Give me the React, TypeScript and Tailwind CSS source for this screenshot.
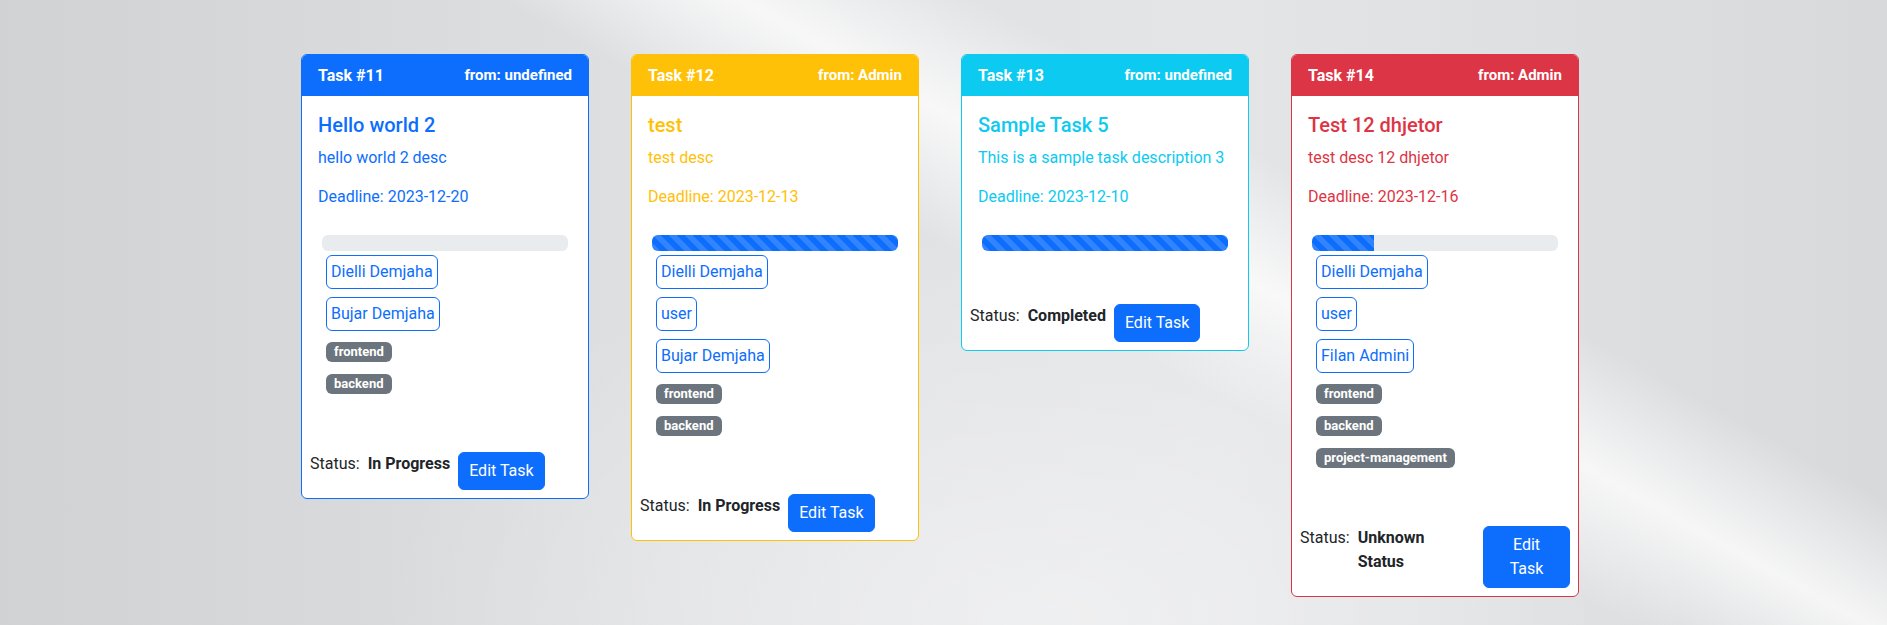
import React from "react";

type Tone = "primary" | "warning" | "info" | "danger";

type Task = {
  id: number;
  from: string;
  title: string;
  desc: string;
  deadline: string;
  progress: number;
  users: string[];
  tags: string[];
  status: string;
  tone: Tone;
  narrowFooter?: boolean;
};

const tasks: Task[] = [
  {
    id: 11,
    from: "undefined",
    title: "Hello world 2",
    desc: "hello world 2 desc",
    deadline: "2023-12-20",
    progress: 0,
    users: ["Dielli Demjaha", "Bujar Demjaha"],
    tags: ["frontend", "backend"],
    status: "In Progress",
    tone: "primary",
  },
  {
    id: 12,
    from: "Admin",
    title: "test",
    desc: "test desc",
    deadline: "2023-12-13",
    progress: 100,
    users: ["Dielli Demjaha", "user", "Bujar Demjaha"],
    tags: ["frontend", "backend"],
    status: "In Progress",
    tone: "warning",
  },
  {
    id: 13,
    from: "undefined",
    title: "Sample Task 5",
    desc: "This is a sample task description 3",
    deadline: "2023-12-10",
    progress: 100,
    users: [],
    tags: [],
    status: "Completed",
    tone: "info",
  },
  {
    id: 14,
    from: "Admin",
    title: "Test 12 dhjetor",
    desc: "test desc 12 dhjetor",
    deadline: "2023-12-16",
    progress: 25,
    users: ["Dielli Demjaha", "user", "Filan Admini"],
    tags: ["frontend", "backend", "project-management"],
    status: "Unknown Status",
    tone: "danger",
    narrowFooter: true,
  },
];

const toneStyles: Record<Tone, { border: string; header: string; text: string }> = {
  primary: { border: "border-[#0d6efd]", header: "bg-[#0d6efd]", text: "text-[#0d6efd]" },
  warning: { border: "border-[#ffc107]", header: "bg-[#ffc107]", text: "text-[#ffc107]" },
  info: { border: "border-[#0dcaf0]", header: "bg-[#0dcaf0]", text: "text-[#0dcaf0]" },
  danger: { border: "border-[#dc3545]", header: "bg-[#dc3545]", text: "text-[#dc3545]" },
};

const TaskCard = ({ task }: { task: Task }) => {
  const tone = toneStyles[task.tone];

  return (
    <div className={`w-[288px] shrink-0 rounded-md border bg-white ${tone.border}`}>
      <div
        className={`flex h-[41px] items-center justify-between rounded-t-[5px] px-4 text-white ${tone.header}`}
      >
        <span className="text-base font-bold">Task #{task.id}</span>
        <span className="text-[15px] font-bold">from: {task.from}</span>
      </div>

      <div className={`px-4 pt-[17px] ${task.tags.length ? "pb-[50px]" : "pb-[45px]"} ${tone.text}`}>
        <h5 className="mb-[9px] text-[20px] leading-6 font-medium">{task.title}</h5>
        <p className="mb-[15px] leading-6">{task.desc}</p>
        <p className="mb-[26px] leading-6">Deadline: {task.deadline}</p>

        <div className="mx-1 h-4 overflow-hidden rounded-md bg-[#e9ecef]">
          <div
            className="h-full bg-[#0d6efd] bg-[linear-gradient(45deg,rgba(255,255,255,.15)_25%,transparent_25%,transparent_50%,rgba(255,255,255,.15)_50%,rgba(255,255,255,.15)_75%,transparent_75%,transparent)] bg-[length:16px_16px]"
            style={{ width: `${task.progress}%` }}
          />
        </div>

        {task.users.length > 0 && (
          <div className="mt-1 ml-2 flex flex-col items-start gap-2">
            {task.users.map((u) => (
              <span
                key={u}
                className="rounded-md border border-[#0d6efd] px-1 py-1 leading-6 text-[#0d6efd]"
              >
                {u}
              </span>
            ))}
          </div>
        )}

        {task.tags.length > 0 && (
          <div className="mt-[11px] ml-2 flex flex-col items-start gap-3">
            {task.tags.map((t) => (
              <span
                key={t}
                className="h-5 rounded-md bg-[#6c757d] px-2 text-[13px] leading-5 font-bold text-white"
              >
                {t}
              </span>
            ))}
          </div>
        )}
      </div>

      <div className="flex items-start gap-2 p-2 text-[#212529]">
        <span className="leading-6">Status:</span>
        <span className={`leading-6 font-bold ${task.narrowFooter ? "w-[100px]" : ""}`}>
          {task.status}
        </span>
        <button
          className={`rounded-md border border-[#0d6efd] bg-[#0d6efd] py-[6px] leading-6 text-white ${
            task.narrowFooter ? "ml-auto w-[87px] px-3" : "px-[10px]"
          }`}
        >
          Edit Task
        </button>
      </div>
    </div>
  );
};

export default function App() {
  return (
    <div className="relative h-[625px] w-full overflow-hidden bg-[#dcdddf] bg-[linear-gradient(29deg,transparent_54%,rgba(255,255,255,.75)_62%,transparent_70%),radial-gradient(ellipse_at_55%_100%,rgba(255,255,255,.45),transparent_45%),linear-gradient(90deg,#d1d2d4_0%,#dfe0e2_35%,#e4e5e7_65%,#d8d9db_100%)] font-['Roboto',sans-serif] text-base">
      <div className="flex items-start justify-center gap-[42px] pt-[54px] pr-[7px]">
        {tasks.map((t) => (
          <TaskCard key={t.id} task={t} />
        ))}
      </div>
    </div>
  );
}
